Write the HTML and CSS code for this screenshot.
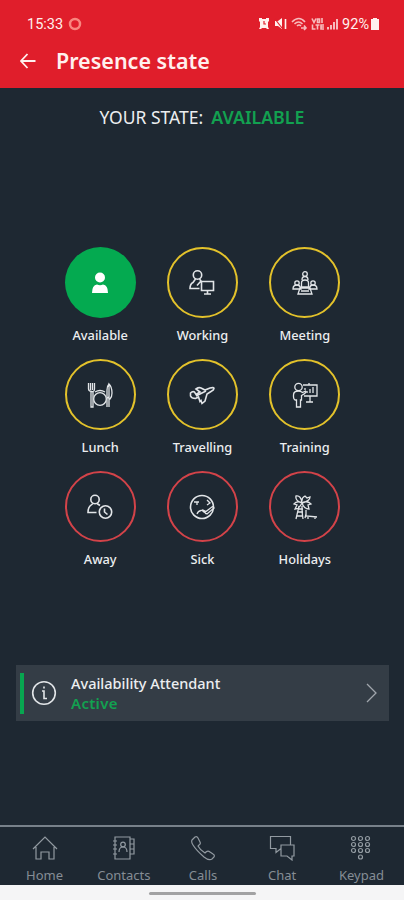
FILE: index.html
```html
<!DOCTYPE html>
<html lang="en">
<head>
    <meta charset="UTF-8">
    <title>Presence state</title>
    <link rel="stylesheet" href="styles.css">
</head>
<body>
<div class="header">
    <div class="status">
        <span class="time">15:33</span>
        <svg class="ring" width="14" height="14" viewBox="0 0 14 14"><circle cx="7" cy="7" r="5"/></svg>
        <svg class="signals" width="82" height="14" viewBox="0 0 82 14">
            <!-- alarm -->
            <path class="fill" d="M1 1h3v1h4V1h3v3l-1 1v5l1 2H9l-1-1H4l-1 1H1l1-2V5L1 4z"/>
            <path class="cut" d="M6 4v3h2"/>
            <!-- mute -->
            <path class="fill" d="M17 4h3l4-3v11l-4-3h-3z"/>
            <path class="cut" d="M17 2l7 9"/>
            <path class="line" d="M27.500 2v10"/>
            <!-- wifi -->
            <path class="line soft" d="M34 5q7-7 13 0M36.500 7q4-4 8 0M39 9q2-2 4 0M43 11h5M46 8.500l2 2.500-2 2"/>
            <!-- volte -->
            <path class="line soft" d="M54 1.500l2 4 2-4M59.500 2h2v3.500h-2zM64 1v5M54.500 7.500v4.500h3M57.500 8h4M59.500 8v4.500M66 8h-3v4h3M63 10h3"/>
            <!-- network -->
            <path class="fill soft" d="M69 10h2v2.500h-2zM72 8h2v4.500h-2zM75 5h2v7.500h-2zM78 2h2v10.500h-2z"/>
        </svg>
        <span class="percent">92%</span>
        <svg class="battery" width="8" height="12" viewBox="0 0 8 12"><path class="fill" d="M2 0h4v1h2v11H0V1h2z"/></svg>
    </div>
    <div class="title">
        <svg width="16" height="16" viewBox="0 0 16 16"><path d="M15.500 8H1M7.500 1L1 8l6.500 7"/></svg>
        <h1>Presence state</h1>
    </div>
</div>

<div class="main">
    <p class="state"><span class="your">YOUR STATE:</span><b>AVAILABLE</b></p>

    <div class="grid">
        <div class="item">
            <div class="circle active">
                <svg width="26" height="26" viewBox="0 0 26 26"><circle cx="13" cy="7.500" r="5"/><path d="M5 23q0-8 5-8.500 3 1.500 6 0 5 .5 5 8.500z"/></svg>
            </div>
            <span>Available</span>
        </div>
        <div class="item">
            <div class="circle yellow">
                <svg width="26" height="26" viewBox="0 0 26 26"><circle cx="8.500" cy="5" r="4.200"/><path d="M6.500 9L4 12.500Q1 14 1 18.500h9.500M10.500 9l1.500 2-4 4.500M12.500 11.500h12v9h-12zM18.500 20.500v3M15 24h7"/></svg>
            </div>
            <span>Working</span>
        </div>
        <div class="item">
            <div class="circle yellow">
                <svg class="fine" width="26" height="26" viewBox="0 0 26 26"><circle cx="13" cy="4" r="2.300"/><path d="M10 10q0-3.500 3-3.500t3 3.500M9.500 13q0-3 3.500-3t3.500 3v4h-7zM6 24l2-6h10l2 6zM9 21h8"/><circle cx="5" cy="13" r="2.200"/><circle cx="21" cy="13" r="2.200"/><path d="M1 19q0-4 4-4 3 0 4 4zM25 19q0-4-4-4-3 0-4 4z"/></svg>
            </div>
            <span>Meeting</span>
        </div>
        <div class="item">
            <div class="circle yellow">
                <svg class="fine" width="26" height="26" viewBox="0 0 26 26"><path d="M1.500 1v6q0 2 3 2.500t3-2.500V1M3.500 1v7M5.500 1v7M4 9v16h2V9M22 25V2q3 3 3 9 0 4-2 6h-1M20 25V8q0-4 2-6M20 16q2 0 2-2"/><circle cx="13" cy="17" r="6.300"/><path d="M8 10q5-3 10 0"/></svg>
            </div>
            <span>Lunch</span>
        </div>
        <div class="item">
            <div class="circle yellow">
                <svg width="26" height="26" viewBox="0 0 26 26"><path d="M1.500 11q2-2 4-1l1.500 2.500 4-2.500-4-3q3-2 5-1l4 2 5-2q4-1 4 .5t-3 3l-4 2.500-2 7-3 2.500-1-3-1 1-1.500-4.500-3 1.500q-4 0-5-2.500zM7 14l10-5"/></svg>
            </div>
            <span>Travelling</span>
        </div>
        <div class="item">
            <div class="circle yellow">
                <svg class="fine" width="26" height="26" viewBox="0 0 26 26"><circle cx="6.500" cy="5" r="3.700"/><path d="M4.500 25v-7H3q-1.500-1-1.500-3v-2q0-4 5-4 2 0 4 1.500l3-1.500q1 2-4 4.500V18H8.500v7zM11 3h14v11H12M13 6v2M17 1v2M15 11V9M18 11V7M21 11V5M18 14v6M14 20h7"/></svg>
            </div>
            <span>Training</span>
        </div>
        <div class="item">
            <div class="circle red">
                <svg width="26" height="26" viewBox="0 0 26 26"><circle cx="8" cy="5.500" r="4.200"/><path d="M6 9.500L3 12q-2 2-2 6.500h8.500M10 9.500l3 2"/><circle cx="18.500" cy="18" r="6.200"/><path d="M17.500 14.500V18l3 2.500"/></svg>
            </div>
            <span>Away</span>
        </div>
        <div class="item">
            <div class="circle red">
                <svg width="26" height="26" viewBox="0 0 26 26"><circle cx="13" cy="13" r="11.500"/><path class="fine" d="M5 8h5M8 8v3M18 6l3 3-3 2M8 20q1-3 4-3.500t5 3.500M14 16l3 1.500 6.500-5 1.500 1.500-7 6-4-2.500z"/></svg>
            </div>
            <span>Sick</span>
        </div>
        <div class="item">
            <div class="circle red">
                <svg class="fine" width="26" height="26" viewBox="0 0 26 26"><path d="M10 9Q5 6 2 10l3 1-2 4q4 0 7-6M10 9Q3 7 4 2q5-1 6 7M10 9q-1-5 3-7l2 2 3-1q0 4-8 6M10 9q5-3 9 1l-3 1 1 4q-5 0-7-6M7 12L4 25M10 12q0 7 1 13M6 15h5M6 18h5M5 22h6M14 16v6l11 1M14 20l-1 4M16 23v2M23 23v2"/></svg>
            </div>
            <span>Holidays</span>
        </div>
    </div>

    <div class="card">
        <div class="bar"></div>
        <svg class="info" width="26" height="26" viewBox="0 0 26 26"><circle cx="13" cy="13" r="11.300"/><path d="M13 6.500v2M11 11h2v7.500h3"/></svg>
        <div class="text">
            <span>Availability Attendant</span>
            <b>Active</b>
        </div>
        <svg class="arrow" width="11" height="20" viewBox="0 0 11 20"><path d="M1 1l9 9-9 9"/></svg>
    </div>
</div>

<div class="nav">
    <div class="tab">
        <svg width="26" height="26" viewBox="0 0 26 26"><path d="M1 14L13 2l12 12M4 12v12h5v-7h8v7h5V12"/></svg>
        <span>Home</span>
    </div>
    <div class="tab">
        <svg width="26" height="26" viewBox="0 0 26 26"><path d="M4 2h15v22H4zM19 4h4v5h-4M19 9h4v5h-4M19 14h4v5h-4M2 6h4M2 10h4M2 14h4M2 19h4M8 17q0-5 4-5t4 5"/><circle cx="12" cy="9.500" r="2.300"/></svg>
        <span>Contacts</span>
    </div>
    <div class="tab">
        <svg width="26" height="26" viewBox="0 0 26 26"><path d="M2 5l3-3q2-1 3 1l2 4q1 2-1 3l-1 1q2 4 7 7l1-1q2-2 4 0l3 2q2 1 1 3l-2 2q-3 2-8-2Q6 15 3 10 1 7 2 5z"/></svg>
        <span>Calls</span>
    </div>
    <div class="tab">
        <svg width="26" height="26" viewBox="0 0 26 26"><path d="M12 13.500l-5 4v-4H1.500V1.500h20V10M12 10h13v11h-2v4l-5-4h-6z"/></svg>
        <span>Chat</span>
    </div>
    <div class="tab">
        <svg width="26" height="26" viewBox="0 0 26 26"><g><circle cx="5.500" cy="3.500" r="2"/><circle cx="12.500" cy="3.500" r="2"/><circle cx="19.500" cy="3.500" r="2"/><circle cx="5.500" cy="9.500" r="2"/><circle cx="12.500" cy="9.500" r="2"/><circle cx="19.500" cy="9.500" r="2"/><circle cx="5.500" cy="15.500" r="2"/><circle cx="12.500" cy="15.500" r="2"/><circle cx="19.500" cy="15.500" r="2"/><circle cx="12.500" cy="22" r="2"/></g></svg>
        <span>Keypad</span>
    </div>
</div>
<div class="gesture"><div class="handle"></div></div>
</body>
</html>
```
FILE: styles.css
```css
* {
    box-sizing: border-box;
}

body {
    margin: 0;
    height: 900px;
    display: flex;
    flex-direction: column;
    background: #1e2832;
    color: #eceef0;
    font-family: "Noto Sans", sans-serif;
    overflow: hidden;
}

svg {
    display: block;
    flex: none;
    fill: none;
    stroke: #e2e5e8;
    stroke-width: 1.6;
}

.header {
    height: 88px;
    background: #e01e2b;
    color: #fff0ee;
}

.status {
    height: 46px;
    padding: 2px 25px 0 27px;
    display: flex;
    align-items: center;
    font-family: Roboto, sans-serif;
    font-size: 14.5px;
}

.ring {
    margin-left: 5px;
    stroke: #f9867f;
    stroke-width: 2.5;
}

.signals {
    margin-left: auto;
    margin-right: 2px;
    stroke: none;
}

.fill {
    fill: #fff0ee;
    stroke: none;
}

.line {
    stroke: #fff0ee;
}

.cut {
    stroke: #e01e2b;
    stroke-width: 1.2;
}

.soft {
    opacity: 0.75;
}

.battery {
    margin-left: 2px;
}

.title {
    height: 30px;
    padding-left: 20px;
    display: flex;
    align-items: center;
}

.title svg {
    stroke: #fff0ee;
    stroke-width: 1.8;
}

.title h1 {
    margin: 0 0 0 20px;
    font-size: 21.5px;
    line-height: 30px;
    font-weight: 600;
}

.main {
    height: 737px;
}

.state {
    margin: 0;
    padding-top: 16px;
    display: flex;
    justify-content: center;
    gap: 8px;
    font-size: 17.5px;
    line-height: 26px;
}

.state b,
.card b {
    color: #12a150;
    font-weight: 600;
}

.state b {
    font-size: 17.8px;
}

.card b {
    font-size: 15px;
    letter-spacing: 0.3px;
}

.grid {
    width: 307px;
    margin: 117px 0 0 49px;
    display: grid;
    grid-template-columns: repeat(3, 1fr);
    grid-auto-rows: 112px;
}

.item {
    display: flex;
    flex-direction: column;
    align-items: center;
    font-size: 12.8px;
    font-weight: 500;
    line-height: 18px;
}

.circle {
    width: 71px;
    height: 71px;
    margin-bottom: 8px;
    display: flex;
    align-items: center;
    justify-content: center;
    border-radius: 50%;
}

.active {
    background: #04aa50;
}

.active svg {
    fill: #fff;
    stroke: none;
}

.yellow {
    border: 2px solid #e3c22b;
}

.red {
    border: 2px solid #d34349;
}

.fine {
    stroke-width: 1.3;
}

.card {
    width: 373px;
    height: 56px;
    margin: 82px 0 0 16px;
    padding: 0 12px 0 4px;
    display: flex;
    align-items: center;
    background: #343d46;
}

.bar {
    width: 4px;
    height: 41px;
    background: #08a650;
}

.info {
    margin: 0 14px 0 7px;
}

.text {
    display: flex;
    flex-direction: column;
    font-size: 14.5px;
    font-weight: 500;
    line-height: 20px;
}

.arrow {
    margin-left: auto;
    stroke: #a0a6ac;
    stroke-width: 1.3;
}

.nav {
    height: 60px;
    padding: 8px 3px 0 5px;
    display: flex;
    border-top: 2px solid #78818a;
    color: #858d95;
    font-size: 13px;
}

.nav svg {
    stroke: #929aa1;
    stroke-width: 1.2;
}

.tab {
    flex: 1;
    display: flex;
    flex-direction: column;
    align-items: center;
    line-height: 18px;
}

.tab span {
    margin-top: 5px;
}

.gesture {
    height: 15px;
    padding-top: 7px;
    background: #f5f5f6;
}

.handle {
    width: 107px;
    height: 3px;
    margin: 0 auto;
    border-radius: 2px;
    background: #a2a2a3;
}
```
